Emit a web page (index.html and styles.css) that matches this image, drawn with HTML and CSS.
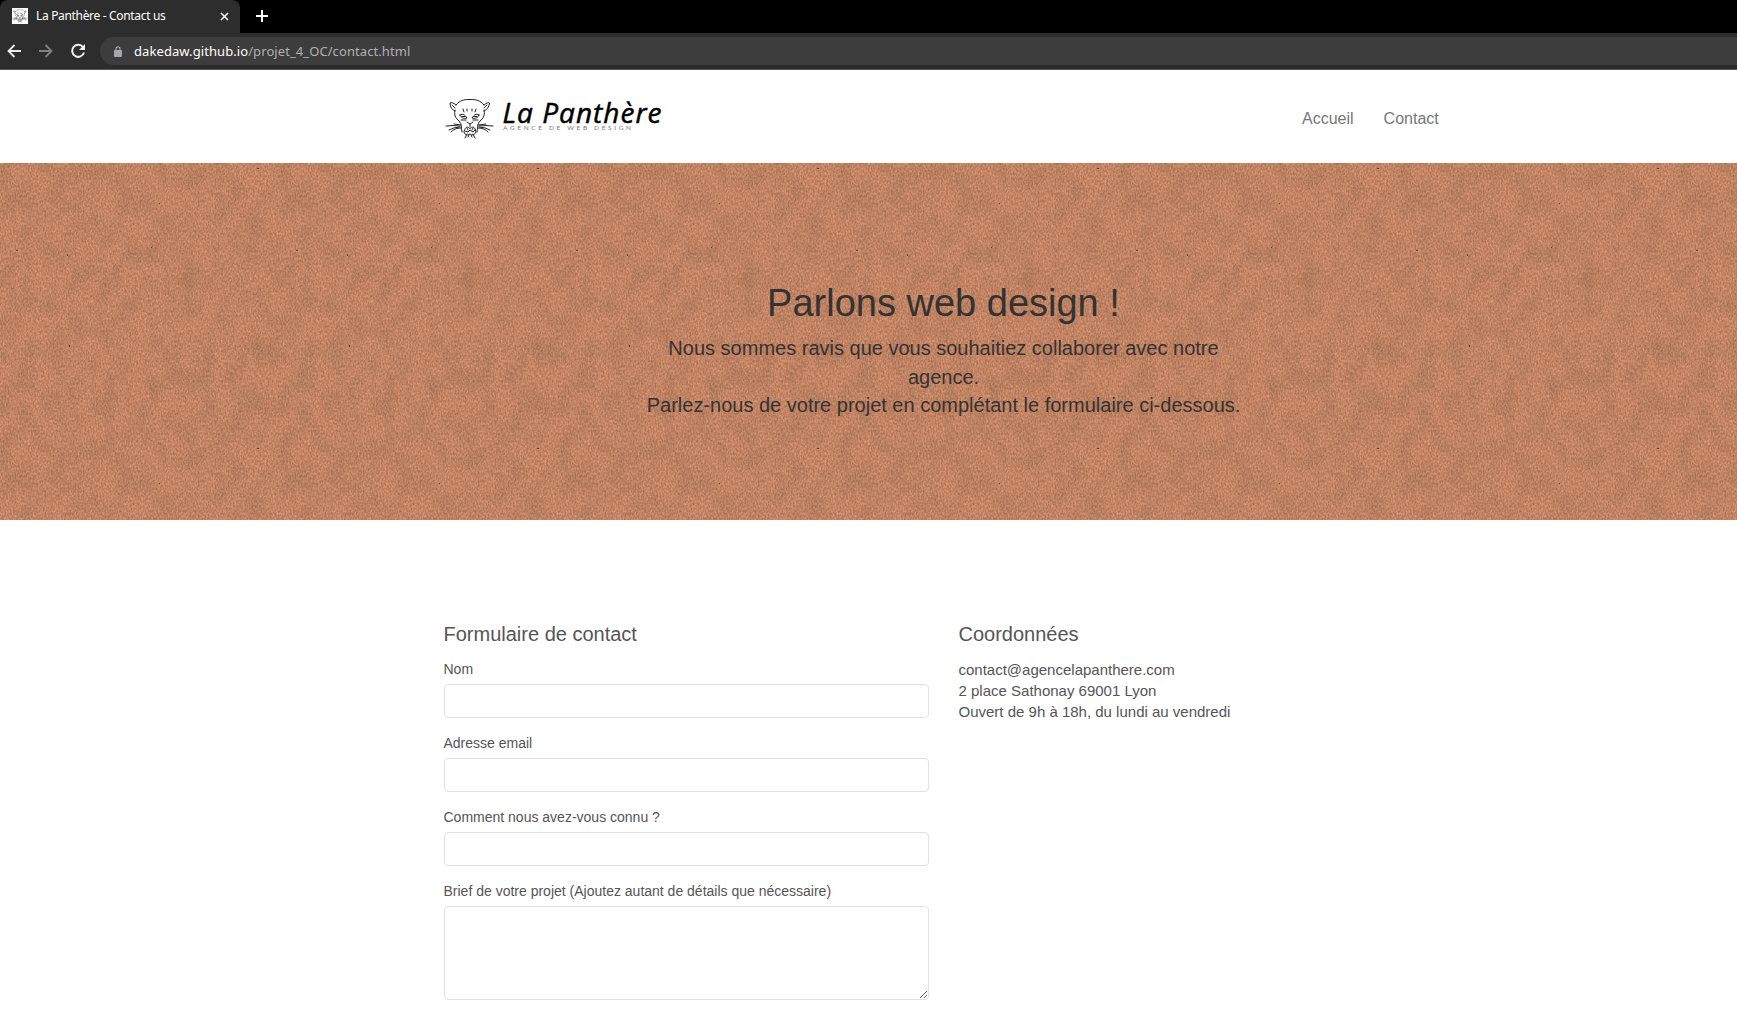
FILE: index.html
```html
<!DOCTYPE html>
<html lang="fr">
<head>
<meta charset="utf-8">
<title>La Panthère - Contact us</title>
<link rel="stylesheet" href="styles.css">
</head>
<body>
<svg class="defs" width="0" height="0" aria-hidden="true">
  <symbol id="panther" viewBox="0 0 50 42">
    <g fill="none" stroke="#222" stroke-width="1" stroke-linecap="round" stroke-linejoin="round">
      <path d="M11 7C15 2 19 1.500 25 1.500S35 2 39 7M11 7C9 5 6 4 5 5C5 9 7 12 10 13M39 7C41 5 44 4 44.500 5C44 9 42 12 39 13M10 12C9 16 10 19 12 21L14 23C17 26 16 29 17 34M39 12C40 16 39 19 37 21L35 23C32 26 33 29 32 34M7 7L10 10M42 7L39 10"/>
      <path d="M15 17C18 15 20 17 22 20C19 21 16 20 15 17ZM34 17C31 15 29 17 27 20C30 21 33 20 34 17ZM16 22L21 22M33 22L28 22M17 18.500H20M29 18.500H32M18 11L19 14M22 11L22 13M31 11L30 14M27 11L27 13"/>
      <path d="M22 24L25 26L28 24M25 26V29M20 31C21 28 24 29 25 31C26 29 29 28 30 31L31 34C29 38 27 37 25 36C23 37 20 38 19 34ZM20 33L23 34L25 32L28 34L30 32M22 30L23 32M28 30L27 32M22 36L20 40M24 37L23 39M28 36L30 40M26 37L27 39"/>
      <path d="M15 28Q8 27 1 28M15 29Q9 29 4 32M16 30Q9 30 6 34M16 27L9 26M34 28Q41 27 48 28M34 29Q40 29 45 32M33 30Q40 30 43 34M33 27L41 26"/>
    </g>
  </symbol>
</svg>
<div class="browser">
  <div class="tabs">
    <div class="tab">
      <svg class="favicon" width="16" height="16"><rect width="16" height="16" fill="#fff"/><use href="#panther" width="16" height="16"/></svg>
      <span class="tab-title">La Panthère - Contact us</span>
      <svg class="close" width="9" height="9" viewBox="0 0 9 9"><path d="M1 1L8 8M8 1L1 8" stroke="#fff" stroke-width="1.500"/></svg>
    </div>
    <svg class="newtab" width="12" height="12" viewBox="0 0 12 12"><path d="M6 0V12M0 6H12" stroke="#fff" stroke-width="2"/></svg>
  </div>
  <div class="toolbar">
    <svg width="14" height="14" viewBox="0 0 14 14"><path d="M14 7H1.500M7.500 1L1.500 7L7.500 13" fill="none" stroke="#eee" stroke-width="1.800"/></svg>
    <svg width="14" height="14" viewBox="0 0 14 14"><path d="M0 7H12.500M6.500 1L12.500 7L6.500 13" fill="none" stroke="#808080" stroke-width="1.800"/></svg>
    <svg width="16" height="16" viewBox="0 0 16 16"><path d="M12 4.200A6 6 0 1 0 13 9.500" fill="none" stroke="#eee" stroke-width="2"/><path d="M14 1V7H8Z" fill="#eee"/></svg>
    <div class="url">
      <svg width="8" height="11" viewBox="0 0 8 11"><rect y="4" width="8" height="7" rx="1" fill="#a5a7aa"/><path d="M2 4.500V2.800a2 2 0 0 1 4 0V4.500" fill="none" stroke="#a5a7aa" stroke-width="1.200"/></svg>
      <span class="address"><span class="domain">dakedaw.github.io</span><span class="path">/projet_4_OC/contact.html</span></span>
    </div>
  </div>
</div>
<header class="nav">
  <svg class="logo" width="228" height="46" viewBox="0 0 228 46">
    <use href="#panther" x="1" y="0" width="50" height="42"/>
    <text class="logo-name" x="58.500" y="25" textLength="159">La Panthère</text>
    <text class="logo-tag" x="59" y="32" textLength="128">AGENCE DE WEB DESIGN</text>
  </svg>
  <nav class="links"><a>Accueil</a><a>Contact</a></nav>
</header>
<section class="hero">
  <svg class="texture" width="100%" height="100%" aria-hidden="true">
    <defs>
      <filter id="paper" filterUnits="userSpaceOnUse" x="0" y="0" width="280" height="280" color-interpolation-filters="sRGB">
        <feTurbulence type="fractalNoise" baseFrequency="0.600 0.400" numOctaves="3" seed="8" stitchTiles="stitch" result="fine"/>
        <feColorMatrix in="fine" values="0.280 0.100 0 0 0.578  0.260 0.080 0 0 0.353  0.220 0.070 0 0 0.250  0 0 0 0 1" result="grain"/>
        <feTurbulence type="fractalNoise" baseFrequency="0.060 0.040" numOctaves="5" seed="11" stitchTiles="stitch" result="wide"/>
        <feColorMatrix in="wide" values="0 0 0 0 0.350  0 0 0 0 0.270  0 0 0 0 0.180  0.300 0 0 0 -0.105" result="stain"/>
        <feMerge><feMergeNode in="grain"/><feMergeNode in="stain"/></feMerge>
      </filter>
      <pattern id="tile" width="280" height="280" patternUnits="userSpaceOnUse">
        <rect width="280" height="280" filter="url(#paper)"/>
        <path d="M151 84h1v1h-1zM67 91h1v2h-1zM69 182h1v2h-1zM16 87h2v1h-2zM159 40h1v1h-1zM257 5h2v1h-2z" fill="#6b432d"/>
      </pattern>
    </defs>
    <rect width="100%" height="100%" fill="url(#tile)"/>
  </svg>
  <div class="hero-text">
    <h1>Parlons web design !</h1>
    <p>Nous sommes ravis que vous souhaitiez collaborer avec notre<br>agence.</p>
    <p class="second">Parlez-nous de votre projet en complétant le formulaire ci-dessous.</p>
  </div>
</section>
<main class="content">
  <form class="form">
    <h2>Formulaire de contact</h2>
    <label>Nom<input type="text"></label>
    <label>Adresse email<input type="text"></label>
    <label>Comment nous avez-vous connu ?<input type="text"></label>
    <label>Brief de votre projet (Ajoutez autant de détails que nécessaire)<textarea></textarea></label>
  </form>
  <section class="details">
    <h2>Coordonnées</h2>
    <p>contact@agencelapanthere.com<br>2 place Sathonay 69001 Lyon<br>Ouvert de 9h à 18h, du lundi au vendredi</p>
  </section>
</main>
</body>
</html>
```
FILE: styles.css
```css
* { box-sizing: border-box; }
html, body { height: 100%; }
body { margin: 0; overflow: hidden; background: #fff; color: #555; font-family: "Liberation Sans", Arial, sans-serif; }
h1, h2, p { margin: 0; font-weight: 400; }
svg { display: block; flex: none; }
.defs { position: absolute; }

.browser { height: 70px; background: #2d2d2d; border-bottom: 1px solid #555; font-family: "Noto Sans", sans-serif; }
.tabs { height: 33px; background: #000; display: flex; align-items: center; }
.tab { width: 240px; height: 33px; background: #2d2d2d; border-radius: 8px 8px 0 0; display: flex; align-items: center; padding: 0 11px 1px 12px; color: #fff; font-size: 12px; }
.tab-title { margin: -2px 0 0 8px; flex: 1; white-space: nowrap; letter-spacing: -0.33px; }
.newtab { margin-left: 16px; margin-top: -1px; }
.toolbar { height: 36px; display: flex; align-items: center; padding-left: 7px; }
.toolbar > svg { margin-right: 18px; }
.toolbar > svg:nth-of-type(3) { margin-right: 13px; }
.url { flex: 1; height: 28px; border-radius: 14px 0 0 14px; background: #3d3d3d; display: flex; align-items: center; padding-left: 14px; }
.address { margin-left: 12px; font-size: 13px; white-space: nowrap; letter-spacing: 0.08px; }
.domain { color: #fff; }
.path { color: #b0b0b0; }

.nav { height: 93px; display: flex; align-items: flex-start; padding: 28px 0 0 444px; }
.logo { overflow: visible; }
.links { display: flex; gap: 30px; margin-left: 630px; padding-top: 12px; font-size: 16px; line-height: 18px; color: #777; }
.logo-name { font: italic 400 28px "Open Sans", sans-serif; fill: #000; stroke: #000; stroke-width: .5px; }
.logo-tag { font: 6.500px Lato, sans-serif; fill: #777; }

.hero { height: 357px; position: relative; background: #c48664; padding-left: 643.5px; }
.texture { position: absolute; inset: 0; }
.hero-text { position: relative; width: 600px; padding-top: 117px; text-align: center; color: #333; font-size: 20px; line-height: 29px; white-space: nowrap; }
h1 { font-size: 38px; line-height: 46px; margin-bottom: 8px; }
.hero-text .second { margin-top: -1px; }

.content { display: flex; gap: 30px; padding: 102px 0 0 443.5px; }
.form { width: 485px; }
h2 { font-size: 20px; line-height: 24px; margin-bottom: 13px; }
label { display: block; font-size: 14px; line-height: 20px; margin-bottom: 15px; }
input, textarea { display: block; width: 100%; height: 34px; margin: 5px 0 0; border: 1px solid #e2e2e2; border-radius: 4px; background: #fff; outline: 0; }
textarea { height: 94px; resize: vertical; }
.details { white-space: nowrap; }
.details p { font-size: 15px; line-height: 21px; }
```
